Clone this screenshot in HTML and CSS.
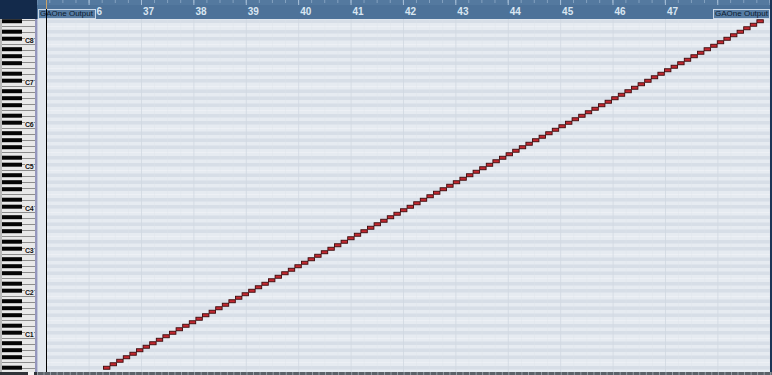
FILE: index.html
```html
<!DOCTYPE html>
<html>
<head>
<meta charset="utf-8">
<link rel="stylesheet" href="styles.css">
</head>
<body>
<div class="editor">
  <div class="corner"></div>
  <div class="ruler">
    <div class="ruler-ticks"></div>
    <div class="ruler-nums">
      <span class="bar bar-cut">6</span><span class="bar">37</span><span class="bar">38</span><span class="bar">39</span><span class="bar">40</span><span class="bar">41</span><span class="bar">42</span><span class="bar">43</span><span class="bar">44</span><span class="bar">45</span><span class="bar">46</span><span class="bar">47</span>
    </div>
  </div>
  <div class="keys">
    <svg class="keys-svg" width="35" height="353" viewBox="0 0 35 353">
      <defs>
        <pattern id="oct" width="35" height="42" y="-17" patternUnits="userSpaceOnUse">
          <rect width="35" height="42" fill="#e9e9e9"/>
          <rect x="2" y="0" width="33" height="1" fill="#8c8c8c"/>
          <rect x="2" y="6" width="33" height="1" fill="#8c8c8c"/>
          <rect x="2" y="12" width="33" height="1" fill="#8c8c8c"/>
          <rect x="2" y="18" width="33" height="1" fill="#8c8c8c"/>
          <rect x="2" y="24" width="33" height="1" fill="#8c8c8c"/>
          <rect x="2" y="30" width="33" height="1" fill="#8c8c8c"/>
          <rect x="2" y="36" width="33" height="1" fill="#8c8c8c"/>
          <rect x="2" y="3.2" width="20" height="4" fill="#050505"/>
          <rect x="2" y="10.2" width="20" height="4" fill="#050505"/>
          <rect x="2" y="17.2" width="20" height="4" fill="#050505"/>
          <rect x="2" y="27.7" width="20" height="4" fill="#050505"/>
          <rect x="2" y="34.7" width="20" height="4" fill="#050505"/>
        </pattern>
      </defs>
      <rect width="35" height="353" fill="url(#oct)"/>
      <rect width="2" height="353" fill="#b9b9b9"/>
    </svg>
    <div class="key-labels">
      <span class="klabel">C8</span><span class="klabel">C7</span><span class="klabel">C6</span><span class="klabel">C5</span><span class="klabel">C4</span><span class="klabel">C3</span><span class="klabel">C2</span><span class="klabel">C1</span>
    </div>
  </div>
  <div class="lane">
    <div class="strip"></div>
    <svg class="roll" width="723" height="353" viewBox="0 0 723 353">
      <defs>
        <pattern id="rows" width="20" height="42" y="-17" patternUnits="userSpaceOnUse">
          <rect width="20" height="42" fill="#e6ebf1"/>
          <rect y="3.5" width="20" height="3.5" fill="#d7dee7"/>
          <rect y="10.5" width="20" height="3.5" fill="#d7dee7"/>
          <rect y="17.5" width="20" height="3.5" fill="#d7dee7"/>
          <rect y="28" width="20" height="3.5" fill="#d7dee7"/>
          <rect y="35" width="20" height="3.5" fill="#d7dee7"/>
          <rect y="24.3" width="20" height="0.5" fill="#f4f6f9"/>
          <rect y="0" width="20" height="0.5" fill="#f4f6f9"/>
        </pattern>
        <pattern id="beats" width="13.1" height="10" x="41.6" patternUnits="userSpaceOnUse">
          <rect width="0.6" height="10" fill="#dde3ea"/>
        </pattern>
        <pattern id="bars" width="52.4" height="10" x="41.6" patternUnits="userSpaceOnUse">
          <rect width="1" height="10" fill="#ccd4de"/>
        </pattern>
      </defs>
      <rect width="723" height="353" fill="url(#rows)"/>
      <rect width="723" height="353" fill="url(#beats)" opacity="0.6"/>
      <rect width="723" height="353" fill="url(#bars)" opacity="0.6"/>
      <g id="notes"></g>
    </svg>
    <div class="edge"></div>
  </div>
  <div class="footer">
    <div class="footer-keys"><span class="footer-block"></span></div>
    <div class="footer-track"></div>
  </div>
  <div class="label-box label-left">GAOne Output</div>
  <div class="label-box label-right">GAOne Output</div>
  <div class="cursor"></div>
</div>
<script src="script.js"></script>
</body>
</html>
```

FILE: styles.css
```css
html, body {
  margin: 0;
  padding: 0;
  background: #e5eaf0;
}
body {
  width: 772px;
  height: 375px;
  overflow: hidden;
  font-family: "Liberation Sans", Arial, sans-serif;
}
.editor {
  position: relative;
  display: grid;
  grid-template-columns: 37px 735px;
  grid-template-rows: 19px 353px 3px;
  width: 772px;
  height: 375px;
}
.corner {
  background: #132a4b;
}
.ruler {
  display: flex;
  flex-direction: column;
  background: #4d7299;
  overflow: hidden;
  border-right: 2px solid #1b3556;
}
.ruler-ticks {
  height: 5px;
  flex: 0 0 5px;
  background-color: #54799f;
  background-image:
    linear-gradient(90deg, #a8c0d8 0 1px, transparent 1px),
    linear-gradient(90deg, #86a3c1 0 1px, transparent 1px);
  background-size: 52.4px 5px, 13.1px 3px;
  background-position: 51.6px 0, 51.6px 0;
  background-repeat: repeat-x, repeat-x;
}
.ruler-nums {
  display: flex;
  align-items: center;
  height: 14px;
  padding-left: 51.6px;
}
.bar {
  flex: 0 0 52.4px;
  box-sizing: border-box;
  padding-left: 2px;
  font-size: 10px;
  font-weight: bold;
  color: #d9e6f2;
  line-height: 12px;
}
.bar-cut {
  padding-left: 8px;
}
.keys {
  position: relative;
  background: #9597bd;
  padding-right: 2px;
  overflow: hidden;
}
.keys-svg {
  display: block;
}
.key-labels {
  position: absolute;
  left: 25px;
  top: 19px;
  display: flex;
  flex-direction: column;
  gap: 36px;
}
.klabel {
  height: 6px;
  font-size: 7px;
  line-height: 6px;
  color: #111;
  background: #e9e9e9;
  letter-spacing: -0.2px;
  font-weight: bold;
}
.lane {
  display: flex;
  overflow: hidden;
}
.strip {
  flex: 0 0 10px;
  background: #e3e8ee;
  border-left: 1px solid #c2c8da;
  box-sizing: border-box;
}
.roll {
  display: block;
  flex: 0 0 723px;
}
.edge {
  flex: 0 0 2px;
  background: #1b3556;
}
.footer {
  grid-column: 1 / 3;
  display: flex;
}
.footer-keys {
  flex: 0 0 37px;
  background: #2f3338;
  display: flex;
  justify-content: flex-end;
  padding-right: 3px;
  box-sizing: border-box;
}
.footer-block {
  width: 6px;
  background: #f4f4f4;
}
.footer-track {
  flex: 1;
  background-color: #5b6269;
  background-image: linear-gradient(90deg, #9aa2aa 0 1px, transparent 1px);
  background-size: 6.55px 3px;
}
.label-box {
  position: absolute;
  z-index: 2;
  top: 9px;
  height: 10px;
  box-sizing: border-box;
  border: 1px solid #c9d7e6;
  background: #577ca3;
  color: #0b1a2e;
  font-size: 8px;
  line-height: 8px;
  padding-left: 1px;
  white-space: nowrap;
  overflow: hidden;
}
.label-left {
  left: 38px;
  width: 58px;
}
.label-right {
  left: 713px;
  width: 57px;
}
.cursor {
  position: absolute;
  z-index: 3;
  left: 46px;
  top: 0;
  width: 1px;
  height: 372px;
  background: linear-gradient(#c9a36a 0 9px, #000 9px);
}
```

FILE: script.js
```js
(function () {
  var g = document.getElementById('notes');
  var ns = 'http://www.w3.org/2000/svg';
  for (var i = 0; i < 100; i++) {
    var r = document.createElementNS(ns, 'rect');
    r.setAttribute('x', (56.5 + 6.6 * i).toFixed(2));
    r.setAttribute('y', (347.25 - 3.5 * i).toFixed(2));
    r.setAttribute('width', '6.4');
    r.setAttribute('height', '3');
    r.setAttribute('fill', '#c42830');
    r.setAttribute('stroke', '#3c0a0c');
    r.setAttribute('stroke-width', '0.9');
    g.appendChild(r);
  }
})();
```
